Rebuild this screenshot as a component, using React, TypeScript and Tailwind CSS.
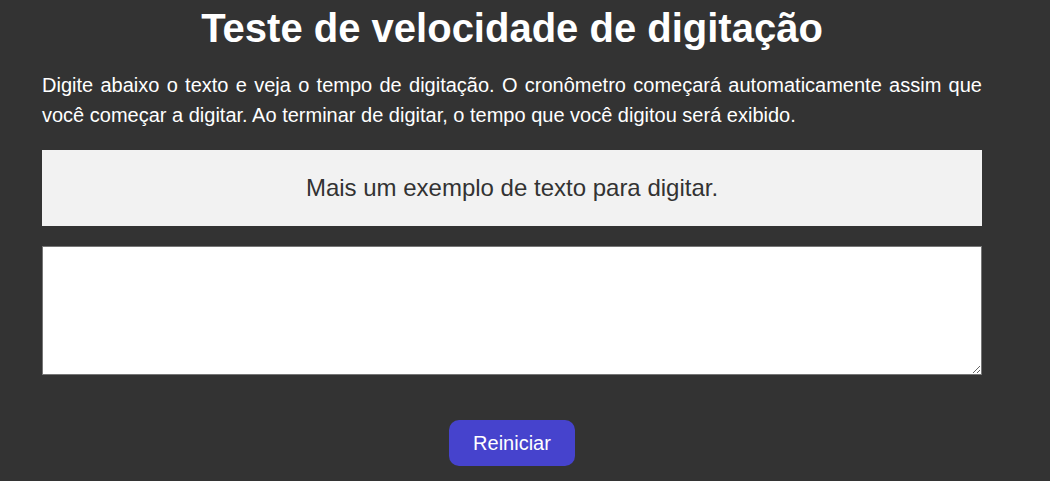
export default function App() {
  return (
    <div className="min-h-screen bg-[#333333] font-['Liberation_Sans',Arial,sans-serif] text-white">
      <div className="ml-[42px] w-[940px]">
        <h1 className="pt-[2px] text-center text-[40px] font-bold leading-[52px]">
          Teste de velocidade de digitação
        </h1>
        <p className="mt-[16px] text-justify text-[20px] leading-[30px]">
          Digite abaixo o texto e veja o tempo de digitação. O cronômetro começará automaticamente assim que
          você começar a digitar. Ao terminar de digitar, o tempo que você digitou será exibido.
        </p>
        <div className="mt-[20px] flex h-[76px] items-center justify-center bg-[#f2f2f2] text-[24px] text-[#333333]">
          Mais um exemplo de texto para digitar.
        </div>
        <textarea className="mt-[20px] block h-[129px] w-full border border-[#767676] bg-white p-[10px] text-[16px] text-black outline-none" />
        <div className="mt-[45px] flex justify-center">
          <button className="h-[46px] w-[126px] rounded-[10px] bg-[#4643cd] text-[20px] text-white">
            Reiniciar
          </button>
        </div>
      </div>
    </div>
  );
}
